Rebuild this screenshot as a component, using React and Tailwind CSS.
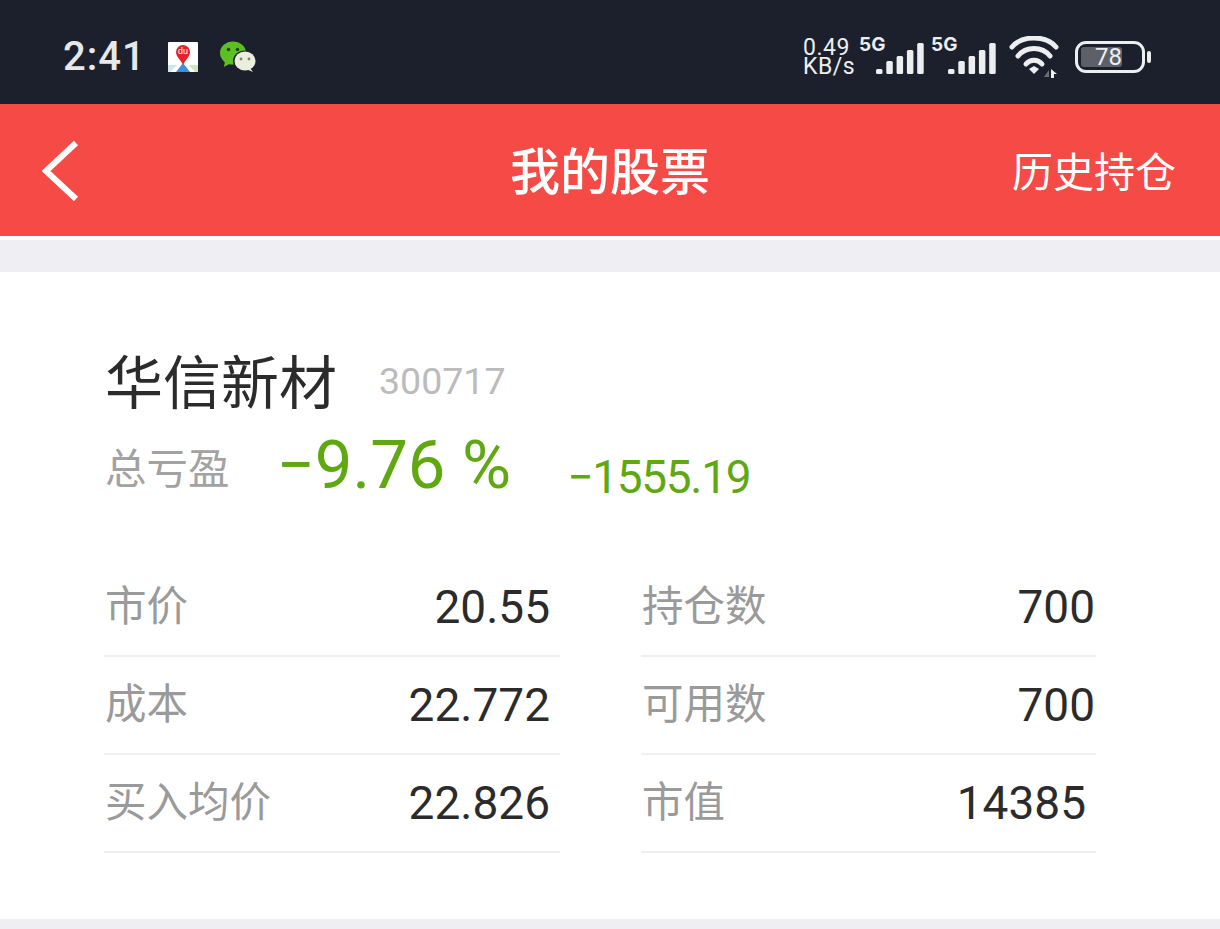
import React from 'react';

const cjk = 'font-["Roboto","Noto_Sans_CJK_SC",sans-serif]';

const SignalBars = () => (
  <svg width="48" height="31" viewBox="0 0 48 31" className="block">
    <g fill="#eceef0">
      <rect x="0" y="26" width="6.5" height="5" rx="1.5" />
      <rect x="10.3" y="18" width="6.5" height="13" rx="1.5" />
      <rect x="20.6" y="13" width="6.5" height="18" rx="1.5" />
      <rect x="30.9" y="7" width="6.5" height="24" rx="1.5" />
      <rect x="41.2" y="0" width="6.5" height="31" rx="1.5" />
    </g>
  </svg>
);

const Signal = () => (
  <div className="relative w-[70px] h-[48px]">
    <span className="absolute left-0 top-[2px] text-[19px] leading-[20px] font-bold text-[#eceef0] font-['Inter',sans-serif]">5G</span>
    <div className="absolute left-[17px] top-[10px]">
      <SignalBars />
    </div>
  </div>
);

const Wifi = () => (
  <svg width="50" height="42" viewBox="0 0 50 42" className="block">
    <g fill="none" stroke="#eceef0" strokeWidth="5" strokeLinecap="round">
      <path d="M3 11 C13 -1 37 -1 47 11" />
      <path d="M9 20 C17 10 33 10 41 20" />
      <path d="M17 28 C21 23 29 23 33 28" />
    </g>
    <path d="M20 33 L25 30 L30 33 L25 38 Z" fill="#eceef0" />
    <path d="M35 41 L40 34 L40 41 Z" fill="#6b6e76" />
    <path d="M42 33 L48 38 L45 38 L45 42 L42 42 Z" fill="#eceef0" />
  </svg>
);

const MapIcon = () => (
  <svg width="30" height="30" viewBox="0 0 30 30" className="block">
    <rect width="30" height="30" rx="1" fill="#ffffff" />
    <path d="M0 23 L9 23 L2 30 L0 30 Z" fill="#cfe3f2" />
    <path d="M21 23 L30 23 L30 30 L27 30 Z" fill="#cfe5c4" />
    <path d="M15 21 L8 30 L22 30 Z" fill="#3d8fe0" />
    <path d="M15 23 C13 18 8 15 8 10 A7 7 0 0 1 22 10 C22 15 17 18 15 23 Z" fill="#e0262b" />
    <text x="15" y="12" textAnchor="middle" fontSize="9" fill="#ffffff" fontFamily="Liberation Sans, sans-serif">du</text>
  </svg>
);

const WeChatIcon = () => (
  <svg width="38" height="32" viewBox="0 0 38 32" className="block">
    <ellipse cx="14" cy="12" rx="13" ry="11.5" fill="#5cc022" />
    <path d="M6 20 L5 26 L12 22 Z" fill="#5cc022" />
    <circle cx="9.5" cy="8.5" r="1.8" fill="#1c4a10" />
    <circle cx="18.5" cy="8.5" r="1.8" fill="#1c4a10" />
    <ellipse cx="26" cy="20" rx="12" ry="10.5" fill="#1c202c" />
    <ellipse cx="26" cy="20" rx="10.5" ry="9.5" fill="#e9efdc" />
    <path d="M31 27 L34 31 L27 28 Z" fill="#e9efdc" />
    <circle cx="22" cy="18" r="1.4" fill="#7e8570" />
    <circle cx="30" cy="18" r="1.4" fill="#7e8570" />
  </svg>
);

const Row = ({ label, value, extra = '' }) => (
  <div className="flex items-center justify-between h-[98px] border-b-2 border-[#eff0f1] pl-[1px] pr-[10px]">
    <span className={`${cjk} text-[41.5px] leading-none text-[#9a9a9a]`}>{label}</span>
    <span className={`font-['Roboto',sans-serif] text-[46px] leading-none text-[#2b2b2b] ${extra}`}>{value}</span>
  </div>
);

export default function App() {
  return (
    <div className={`${cjk} w-[1220px] h-[929px] overflow-hidden bg-white flex flex-col`}>
      <div className="h-[104px] bg-[#1c202c] flex items-center justify-between pl-[63px] pr-[69px] pt-[10px] shrink-0">
        <div className="flex items-center">
          <span className="font-['Roboto',sans-serif] font-medium text-[40px] leading-none tracking-[1px] text-[#e6e8ea] w-[105px]">2:41</span>
          <MapIcon />
          <div className="ml-[21px]">
            <WeChatIcon />
          </div>
        </div>
        <div className="flex items-center">
          <div className="font-['Roboto',sans-serif] text-[#eceef0] text-[23px] leading-[19px] tracking-[0.5px] w-[56px] text-left">
            <div>0.49</div>
            <div>KB/s</div>
          </div>
          <Signal />
          <div className="ml-[2px]">
            <Signal />
          </div>
          <div className="ml-[8px]">
            <Wifi />
          </div>
          <div className="ml-[16px] flex items-center">
            <div className="w-[70px] h-[32px] rounded-[11px] border-[3px] border-[#eceef0] p-[3px]">
              <div className="w-[41px] h-full bg-[#5d6069] rounded-[3px] flex items-center justify-end">
                <span className="font-['Roboto',sans-serif] text-[24px] leading-none text-[#eceef0]">78</span>
              </div>
            </div>
            <div className="ml-[2px] w-[4px] h-[12px] rounded-[2px] bg-[#eceef0]" />
          </div>
        </div>
      </div>

      <div className="relative h-[132px] bg-[#f54a46] flex items-center justify-center pt-[6px] shrink-0">
        <svg width="40" height="62" viewBox="0 0 40 62" className="absolute left-[40px] top-[35px]">
          <path d="M36 4 L6 32 L36 60" fill="none" stroke="#ffffff" strokeWidth="6" />
        </svg>
        <span className="text-[50px] leading-none font-medium text-white">我的股票</span>
        <span className="absolute right-[44px] top-[49px] text-[41px] leading-none text-white">历史持仓</span>
      </div>

      <div className="h-[4px] bg-white shrink-0" />
      <div className="h-[32px] bg-[#eeeef3] shrink-0" />

      <div className="flex-1 px-[104px] pt-[79px]">
        <div className="flex items-center h-[66px] pl-[1px]">
          <span className="text-[58px] leading-none text-[#2b2b2b]">华信新材</span>
          <span className="ml-[42px] mb-[5px] font-['Roboto',sans-serif] text-[37.5px] leading-none text-[#bbbbbb]">300717</span>
        </div>
        <div className="flex items-center h-[60px] mt-[23px] pl-[1px]">
          <span className="text-[41.5px] leading-none text-[#a2a2a2]">总亏盈</span>
          <span className="ml-[47px] mb-[10px] font-['Roboto',sans-serif] text-[67px] leading-none text-[#5fa812]">−9.76 %</span>
          <span className="ml-[56px] mt-[14px] font-['Roboto',sans-serif] text-[46px] leading-none tracking-[-1.3px] text-[#5fa812]">−1555.19</span>
        </div>

        <div className="grid grid-cols-[456px_455px] gap-x-[81px] mt-[59px]">
          <div className="flex flex-col">
            <Row label="市价" value="20.55" />
            <Row label="成本" value="22.772" />
            <Row label="买入均价" value="22.826" />
          </div>
          <div className="flex flex-col">
            <Row label="持仓数" value="700" extra="-mr-[9px]" />
            <Row label="可用数" value="700" extra="-mr-[9px]" />
            <Row label="市值" value="14385" />
          </div>
        </div>
      </div>

      <div className="h-[10px] bg-[#eeeef3] shrink-0" />
    </div>
  );
}
